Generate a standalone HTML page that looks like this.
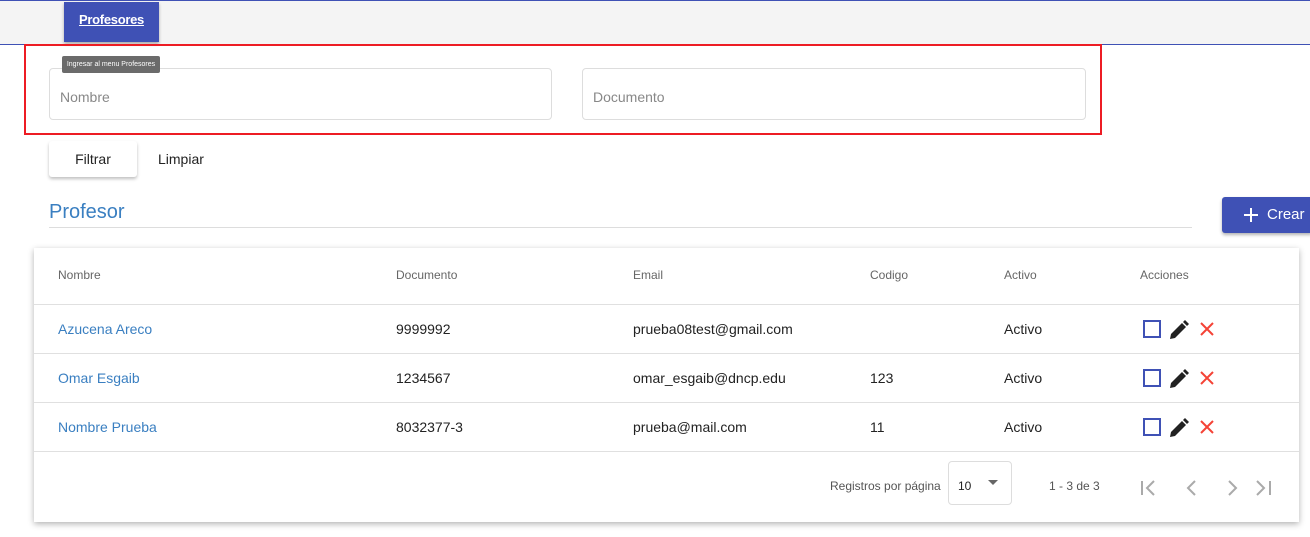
<!DOCTYPE html>
<html><head><meta charset="utf-8"><style>
*{box-sizing:border-box;margin:0;padding:0}
body{width:1310px;height:537px;overflow:hidden;background:#fff;font-family:"Liberation Sans",Arial,sans-serif;position:relative;color:#222}
.abs{position:absolute}
.hdr{left:0;top:0;width:1310px;height:45px;background:#f4f4f4;border-top:1px solid #3f51b5;border-bottom:1px solid #3f51b5}
.navb{left:64px;top:2px;width:95px;height:40px;background:#3f51b5;color:#fff;font-size:13px;font-weight:bold;text-decoration:underline;text-align:center;line-height:36px;box-shadow:0 2px 3px rgba(0,0,0,.3);letter-spacing:-0.3px}
.red{left:24px;top:44px;width:1078px;height:91px;border:2px solid #ed1c24}
.inp{height:52px;border:1px solid #ddd;border-radius:4px;font-size:14px;color:#888;padding-left:10px;line-height:56px}
.tip{left:62px;top:56px;width:98px;height:17px;background:#6b6b6b;color:#fff;font-size:7px;line-height:17px;text-align:center;border-radius:2px}
.btn{font-size:14px;color:#222;text-align:center;line-height:36px;height:36px}
.card{left:34px;top:248px;width:1265px;height:274px;background:#fff;box-shadow:0 2px 6px rgba(0,0,0,.3)}
.th{font-size:12px;color:#666;top:20px}
.row{left:0;width:1265px;height:49px;border-top:1px solid #e0e0e0;font-size:14px}
.row span{position:absolute;top:16px}
.lnk{color:#3a7fc1}
</style></head><body>
<div class="abs hdr"></div>
<div class="abs navb">Profesores</div>
<div class="abs red"></div>
<div class="abs inp" style="left:49px;top:68px;width:503px">Nombre</div>
<div class="abs inp" style="left:582px;top:68px;width:504px">Documento</div>
<div class="abs tip">Ingresar al menu Profesores</div>
<div class="abs btn" style="left:49px;top:141px;width:88px;box-shadow:0 2px 3px rgba(0,0,0,.25);border-radius:3px">Filtrar</div>
<div class="abs btn" style="left:158px;top:141px">Limpiar</div>
<div class="abs" style="left:49px;top:201px;font-size:20px;color:#3a7fc1">Profesor</div>
<div class="abs" style="left:49px;top:227px;width:1143px;height:1px;background:#ddd"></div>
<div class="abs" style="left:1222px;top:197px;width:90px;height:36px;background:#3f51b5;color:#fff;font-size:15px;line-height:36px;border-radius:3px 0 0 3px;box-shadow:0 2px 3px rgba(0,0,0,.3)"><svg class="abs" style="left:21px;top:10px" width="16" height="16"><path d="M8 1v14M1 8h14" stroke="#fff" stroke-width="2"/></svg><span style="position:absolute;left:45px">Crear</span></div>
<div class="abs card">
<span class="abs th" style="left:24px">Nombre</span>
<span class="abs th" style="left:362px">Documento</span>
<span class="abs th" style="left:599px">Email</span>
<span class="abs th" style="left:836px">Codigo</span>
<span class="abs th" style="left:970px">Activo</span>
<span class="abs th" style="left:1106px">Acciones</span>
<div class="abs row" style="top:56px"><span class="lnk" style="left:24px">Azucena Areco</span><span style="left:362px">9999992</span><span style="left:599px">prueba08test@gmail.com</span><span style="left:970px">Activo</span>
<svg class="abs" style="left:1108px;top:14px" width="80" height="22"><rect x="2" y="2" width="16" height="16" fill="none" stroke="#3f51b5" stroke-width="2"/><path d="M28 20l1-5 11-11 4 4-11 11z M41 3l2-2 4 4-2 2z" fill="#222"/><path d="M59 4l12 12M71 4L59 16" stroke="#f44336" stroke-width="2"/></svg></div>
<div class="abs row" style="top:105px"><span class="lnk" style="left:24px">Omar Esgaib</span><span style="left:362px">1234567</span><span style="left:599px">omar_esgaib@dncp.edu</span><span style="left:836px">123</span><span style="left:970px">Activo</span>
<svg class="abs" style="left:1108px;top:14px" width="80" height="22"><rect x="2" y="2" width="16" height="16" fill="none" stroke="#3f51b5" stroke-width="2"/><path d="M28 20l1-5 11-11 4 4-11 11z M41 3l2-2 4 4-2 2z" fill="#222"/><path d="M59 4l12 12M71 4L59 16" stroke="#f44336" stroke-width="2"/></svg></div>
<div class="abs row" style="top:154px"><span class="lnk" style="left:24px">Nombre Prueba</span><span style="left:362px">8032377-3</span><span style="left:599px">prueba@mail.com</span><span style="left:836px">11</span><span style="left:970px">Activo</span>
<svg class="abs" style="left:1108px;top:14px" width="80" height="22"><rect x="2" y="2" width="16" height="16" fill="none" stroke="#3f51b5" stroke-width="2"/><path d="M28 20l1-5 11-11 4 4-11 11z M41 3l2-2 4 4-2 2z" fill="#222"/><path d="M59 4l12 12M71 4L59 16" stroke="#f44336" stroke-width="2"/></svg></div>
<div class="abs" style="left:0;top:203px;width:1265px;height:1px;background:#e0e0e0"></div>
<span class="abs" style="left:796px;top:231px;font-size:12px;color:#555">Registros por página</span>
<div class="abs" style="left:914px;top:213px;width:64px;height:44px;border:1px solid #ddd;border-radius:4px;font-size:12px"><span class="abs" style="left:9px;top:17px">10</span><svg class="abs" style="left:39px;top:18px" width="12" height="8"><path d="M0 0h10L5 5z" fill="#666"/></svg></div>
<span class="abs" style="left:1015px;top:231px;font-size:12px;color:#555">1 - 3 de 3</span>
<svg class="abs" style="left:1100px;top:228px" width="140" height="24" fill="none" stroke="#aaa" stroke-width="2"><path d="M8 5v14M20 5l-7 7 7 7M61 5l-7 7 7 7M95 5l7 7-7 7M136 5v14M123 5l7 7-7 7"/></svg>
</div>
</body></html>
